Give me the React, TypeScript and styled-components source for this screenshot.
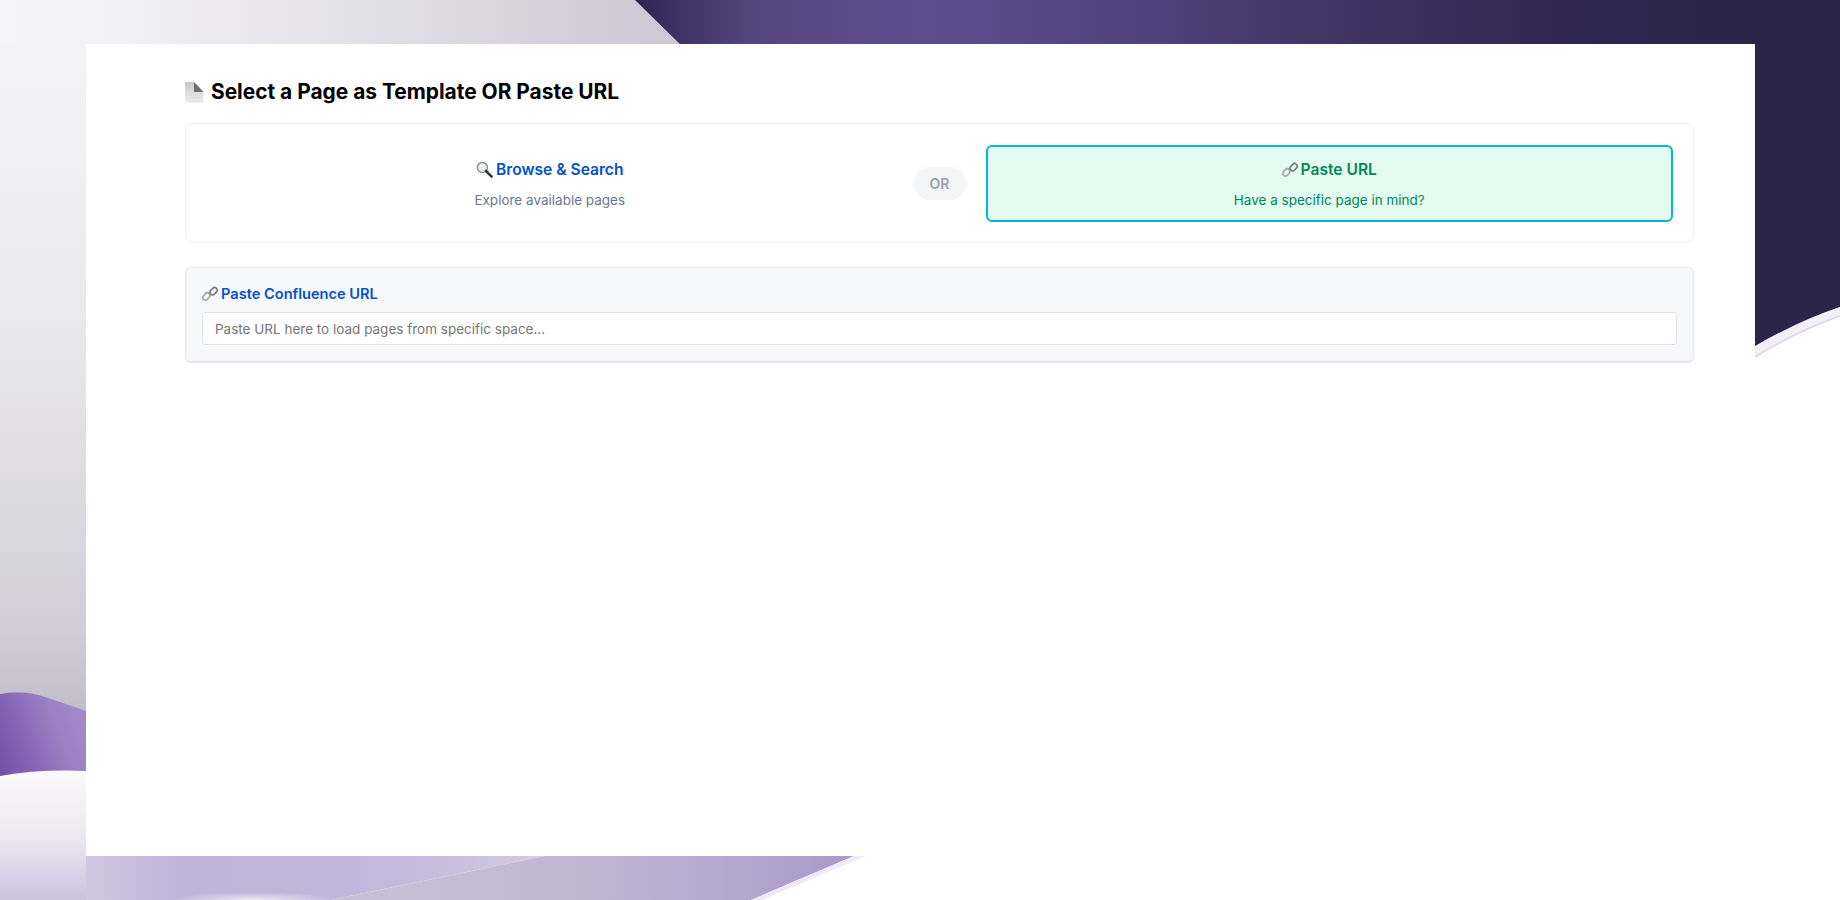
import React from 'react'
import styled, { createGlobalStyle } from 'styled-components'

const GlobalStyle = createGlobalStyle`
  html, body {
    margin: 0;
    padding: 0;
    height: 100%;
    background: #fff;
  }
  body {
    font-family: Inter, "Liberation Sans", sans-serif;
    color: #000;
  }
`

const PageIcon = () => (
  <svg width={19} height={21} viewBox="0 0 19 21">
    <defs>
      <linearGradient id="sheet" x1="0" y1="0" x2="0" y2="1">
        <stop offset="0" stopColor="#c6c6c6" />
        <stop offset="0.55" stopColor="#e0e0e0" />
        <stop offset="1" stopColor="#f2f2f2" />
      </linearGradient>
    </defs>
    <path d="M0 0H9L18.5 10V21H0Z" fill="url(#sheet)" />
    <path d="M9 0L18.5 10H9Z" fill="#6f6f75" />
    <path d="M2 13H17M2 16H17M2 19H17" stroke="#d6d6d6" strokeWidth="0.7" />
  </svg>
)

const SearchIcon = () => (
  <svg width={17} height={17} viewBox="0 0 17 17">
    <circle cx="6.4" cy="6.4" r="5" fill="#e8eef2" stroke="#8d9298" strokeWidth="1.5" />
    <path d="M3.6 5.6A3.2 3.2 0 0 1 6 3.4" fill="none" stroke="#fff" strokeWidth="1" />
    <path d="M10 10L15.6 15.6" stroke="#35373b" strokeWidth="2.6" strokeLinecap="round" />
  </svg>
)

const LinkIcon = () => (
  <svg width={16} height={16} viewBox="0 0 16 16">
    <g fill="none" strokeWidth="1.6">
      <rect x="1.8" y="6.4" width="5.2" height="8" rx="2.6" transform="rotate(42 4.4 10.4)" stroke="#a2a5aa" />
      <rect x="9" y="1.2" width="5.2" height="8" rx="2.6" transform="rotate(42 11.6 5.2)" stroke="#73777d" />
    </g>
  </svg>
)

const Backdrop = () => (
  <BackdropSvg viewBox="0 0 1840 900" preserveAspectRatio="none">
    <defs>
      <linearGradient id="mistTop" gradientUnits="userSpaceOnUse" x1="0" y1="0" x2="640" y2="0">
        <stop offset="0" stopColor="#f5f4f6" />
        <stop offset="0.14" stopColor="#f3f2f4" />
        <stop offset="0.55" stopColor="#e3e1e8" />
        <stop offset="1" stopColor="#cdc9d6" />
      </linearGradient>
      <linearGradient id="mistLeft" gradientUnits="userSpaceOnUse" x1="0" y1="44" x2="0" y2="712">
        <stop offset="0" stopColor="#f4f3f5" />
        <stop offset="0.4" stopColor="#eae9ec" />
        <stop offset="0.7" stopColor="#dbd9e0" />
        <stop offset="0.88" stopColor="#d0cdd9" />
        <stop offset="1" stopColor="#c1bec9" />
      </linearGradient>
      <linearGradient id="night" gradientUnits="userSpaceOnUse" x1="635" y1="0" x2="1840" y2="0">
        <stop offset="0" stopColor="#2b2350" />
        <stop offset="0.04" stopColor="#3f3369" />
        <stop offset="0.1" stopColor="#56467f" />
        <stop offset="0.24" stopColor="#5f4e8e" />
        <stop offset="0.42" stopColor="#50427d" />
        <stop offset="0.62" stopColor="#3d3160" />
        <stop offset="0.8" stopColor="#2d264f" />
        <stop offset="1" stopColor="#2a2547" />
      </linearGradient>
      <linearGradient id="hill" gradientUnits="userSpaceOnUse" x1="0" y1="762" x2="86" y2="728">
        <stop offset="0" stopColor="#7452a8" />
        <stop offset="0.7" stopColor="#9a7fc4" />
        <stop offset="1" stopColor="#a28ac8" />
      </linearGradient>
      <linearGradient id="snow" gradientUnits="userSpaceOnUse" x1="0" y1="775" x2="0" y2="900">
        <stop offset="0" stopColor="#faf8fa" />
        <stop offset="0.5" stopColor="#ece8f1" />
        <stop offset="1" stopColor="#cbc3df" />
      </linearGradient>
      <linearGradient id="floorLeft" gradientUnits="userSpaceOnUse" x1="86" y1="0" x2="545" y2="0">
        <stop offset="0" stopColor="#cfc8e1" />
        <stop offset="0.2" stopColor="#bfb4d9" />
        <stop offset="0.55" stopColor="#c0b6dc" />
        <stop offset="0.8" stopColor="#c7bfdd" />
        <stop offset="1" stopColor="#d4cee2" />
      </linearGradient>
      <linearGradient id="floorRight" gradientUnits="userSpaceOnUse" x1="400" y1="0" x2="854" y2="0">
        <stop offset="0" stopColor="#c6bfd6" />
        <stop offset="0.4" stopColor="#bfb7d2" />
        <stop offset="0.7" stopColor="#b4a9d0" />
        <stop offset="1" stopColor="#aa98c8" />
      </linearGradient>
      <radialGradient id="glow" cx="0.5" cy="1" r="0.5">
        <stop offset="0" stopColor="#efeaf5" stopOpacity="0.95" />
        <stop offset="1" stopColor="#efeaf5" stopOpacity="0" />
      </radialGradient>
    </defs>
    <rect width="1840" height="44" fill="url(#mistTop)" />
    <rect y="44" width="86" height="668" fill="url(#mistLeft)" />
    <path d="M635 0H1840V307Q1790 325 1740 356L690 54Z" fill="url(#night)" />
    <path d="M1840 900H751L866 856L1755 356Q1800 332 1840 316Z" fill="#fff" />
    <path d="M1755 346Q1800 320 1840 307V316Q1795 332 1755 357Z" fill="#f3eff9" />
    <path d="M1755 357Q1795 332 1840 316" fill="none" stroke="#d9d0ea" strokeWidth="1.5" />
    <path d="M0 694Q25 690 45 697Q66 704 86 711V780H0Z" fill="url(#hill)" />
    <path d="M0 776Q40 769 86 771V900H0Z" fill="url(#snow)" />
    <path d="M86 856H545L330 900H86Z" fill="url(#floorLeft)" />
    <path d="M545 856H854L751 900H330Z" fill="url(#floorRight)" />
    <path d="M170 884H338L330 900H170Z" fill="url(#glow)" />
    <path d="M854 856H866L762 900H751Z" fill="#efeaf7" />
  </BackdropSvg>
)

const App = () => (
  <>
    <GlobalStyle />
    <Backdrop />
    <Page>
      <Card>
        <Heading>
          <PageIcon />
          Select a Page as Template OR Paste URL
        </Heading>

        <ChoicePanel>
          <Choice>
            <ChoiceTitle>
              <SearchIcon />
              Browse &amp; Search
            </ChoiceTitle>
            <ChoiceHint>Explore available pages</ChoiceHint>
          </Choice>
          <OrPill>OR</OrPill>
          <Choice $active>
            <ChoiceTitle $active>
              <LinkIcon />
              Paste URL
            </ChoiceTitle>
            <ChoiceHint $active>Have a specific page in mind?</ChoiceHint>
          </Choice>
        </ChoicePanel>

        <UrlPanel>
          <UrlLabel htmlFor="page-url">
            <LinkIcon />
            Paste Confluence URL
          </UrlLabel>
          <UrlInput id="page-url" type="text" placeholder="Paste URL here to load pages from specific space..." />
        </UrlPanel>
      </Card>
    </Page>
  </>
)

export default App

const BackdropSvg = styled.svg`
  position: fixed;
  inset: 0;
  width: 100%;
  height: 100%;
  z-index: 0;
`

const Page = styled.div`
  position: relative;
  z-index: 1;
  box-sizing: border-box;
  height: 900px;
  padding: 44px 85px 44px 86px;
`

const Card = styled.main`
  box-sizing: border-box;
  height: 812px;
  background: #fff;
  padding: 34px 61px 0 99px;
`

const Heading = styled.h1`
  display: flex;
  align-items: center;
  gap: 7px;
  margin: 0 0 17px;
  font-size: 20.9px;
  line-height: 28px;
  font-weight: 700;
  color: #000;
`

const ChoicePanel = styled.section`
  box-sizing: border-box;
  display: flex;
  align-items: center;
  gap: 20px;
  height: 120px;
  padding: 0 20px;
  background: #fff;
  border: 1px solid #f0f1f3;
  border-radius: 8px;
`

const Choice = styled.div<{ $active?: boolean }>`
  box-sizing: border-box;
  flex: 1;
  height: 77px;
  display: flex;
  flex-direction: column;
  align-items: center;
  padding: 11px 10px;
  border: 2px solid ${p => (p.$active ? '#00b8d9' : 'transparent')};
  border-radius: 6px;
  background: ${p => (p.$active ? '#e3fcef' : 'transparent')};
`

const ChoiceTitle = styled.div<{ $active?: boolean }>`
  display: flex;
  align-items: center;
  gap: 3px;
  font-size: 15.6px;
  line-height: 24px;
  font-weight: 600;
  color: ${p => (p.$active ? '#00875a' : '#0052cc')};
`

const ChoiceHint = styled.div<{ $active?: boolean }>`
  margin-top: 8px;
  font-size: 13.5px;
  line-height: 21px;
  color: ${p => (p.$active ? '#00875a' : '#6b778c')};
`

const OrPill = styled.div`
  display: flex;
  align-items: center;
  justify-content: center;
  width: 52px;
  height: 33px;
  border-radius: 17px;
  background: #f4f5f7;
  color: #97a0af;
  font-size: 14px;
  font-weight: 600;
`

const UrlPanel = styled.section`
  box-sizing: border-box;
  display: flex;
  flex-direction: column;
  gap: 8px;
  height: 96px;
  margin-top: 24px;
  padding: 16px;
  background: #f7f8f9;
  border: 1px solid #e4e6ea;
  border-bottom-width: 2px;
  border-radius: 6px;
`

const UrlLabel = styled.label`
  display: flex;
  align-items: center;
  gap: 3px;
  font-size: 14.6px;
  line-height: 20px;
  font-weight: 600;
  color: #0052cc;
`

const UrlInput = styled.input`
  box-sizing: border-box;
  width: 100%;
  height: 35px;
  padding: 0 12px;
  background: #fff;
  border: 1px solid #dfe1e6;
  border-radius: 3px;
  font-family: inherit;
  font-size: 13.5px;
  outline: none;
  &::placeholder {
    color: #757575;
    opacity: 1;
  }
`
